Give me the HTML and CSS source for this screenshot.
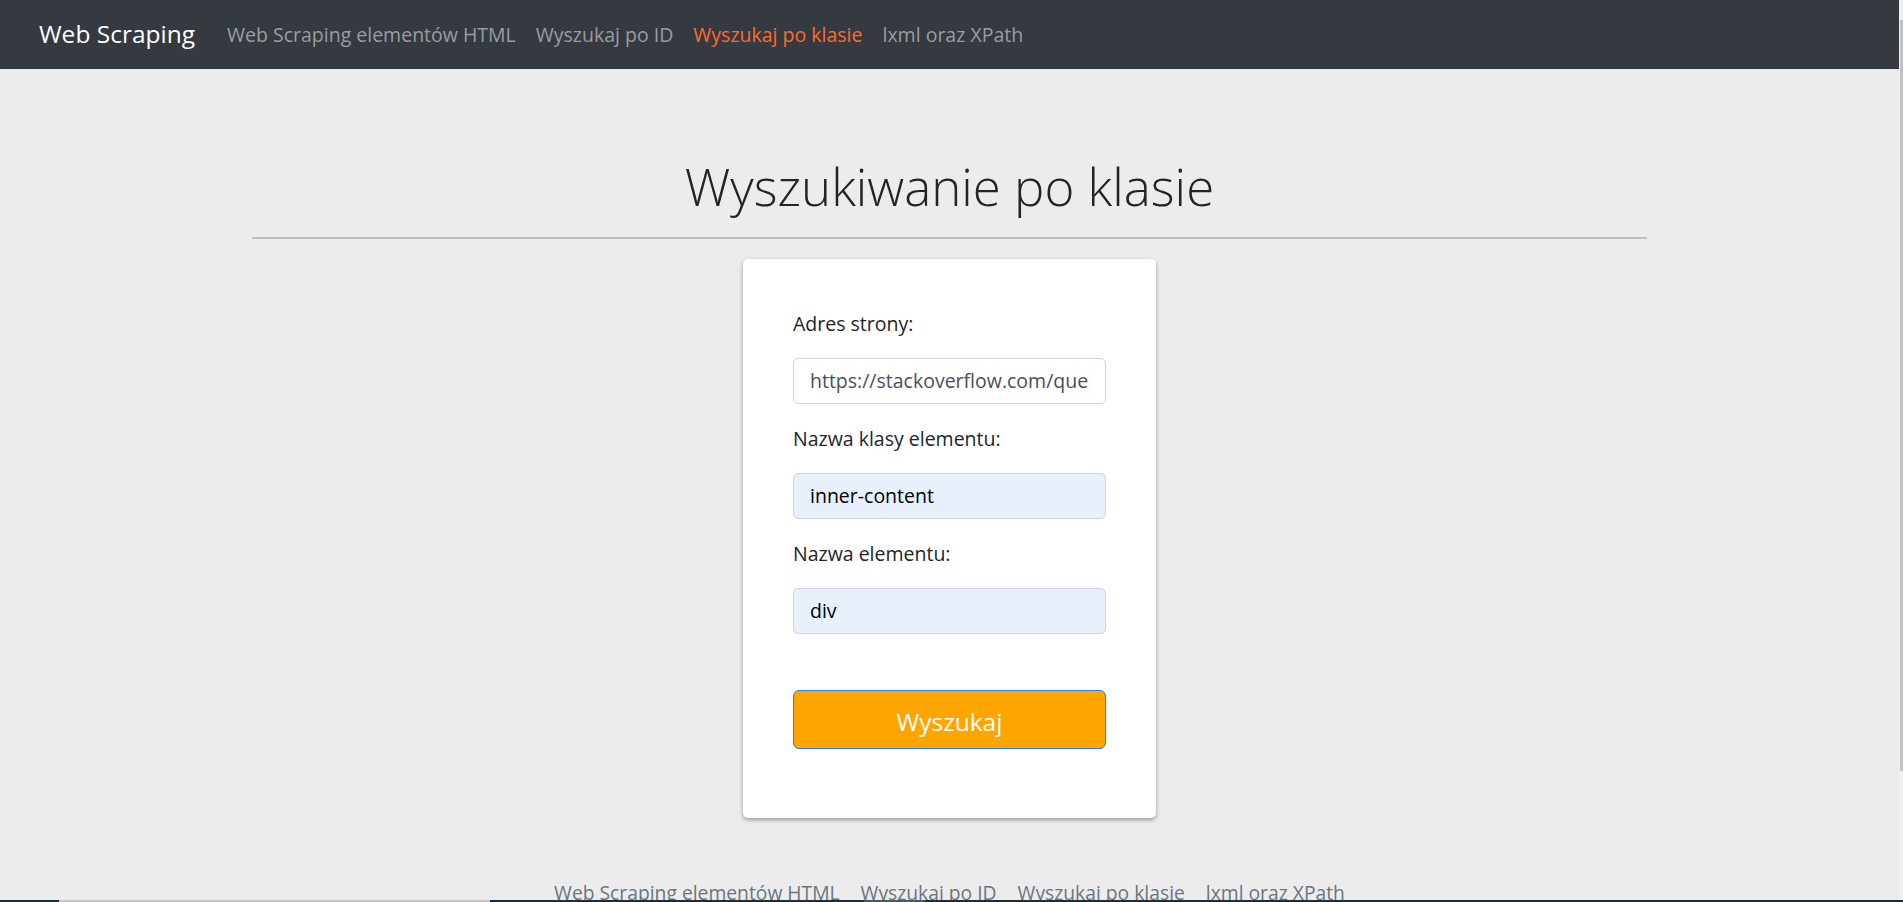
FILE: index.html
```html
<!DOCTYPE html>
<html lang="pl">
<head>
<meta charset="utf-8">
<title>Wyszukiwanie po klasie</title>
<link rel="stylesheet" href="styles.css">
</head>
<body>
<div class="page">
  <div class="viewport">
    <div class="main">
      <nav class="navbar">
        <a class="brand" href="#">Web Scraping</a>
        <ul class="nav">
          <li><a class="nav-link" href="#">Web Scraping elementów HTML</a></li>
          <li><a class="nav-link" href="#">Wyszukaj po ID</a></li>
          <li><a class="nav-link active" href="#">Wyszukaj po klasie</a></li>
          <li><a class="nav-link" href="#">lxml oraz XPath</a></li>
        </ul>
      </nav>
      <section class="content">
        <h1 class="title">Wyszukiwanie po klasie</h1>
        <hr class="divider">
        <form class="card">
          <div class="form-group">
            <label class="label">Adres strony:</label>
            <input class="input" type="text" value="https://stackoverflow.com/questions">
          </div>
          <div class="form-group">
            <label class="label">Nazwa klasy elementu:</label>
            <input class="input autofill" type="text" value="inner-content">
          </div>
          <div class="form-group">
            <label class="label">Nazwa elementu:</label>
            <input class="input autofill" type="text" value="div">
          </div>
          <button class="btn" type="button">Wyszukaj</button>
        </form>
      </section>
      <footer class="footer">
        <a class="foot-link" href="#">Web Scraping elementów HTML</a>
        <a class="foot-link" href="#">Wyszukaj po ID</a>
        <a class="foot-link" href="#">Wyszukaj po klasie</a>
        <a class="foot-link" href="#">lxml oraz XPath</a>
      </footer>
    </div>
    <div class="scrollbar"><div class="thumb"></div></div>
  </div>
  <div class="strip">
    <span class="seg seg-a"></span>
    <span class="seg seg-b"></span>
    <span class="seg seg-c"></span>
    <span class="seg seg-d"></span>
    <span class="seg seg-e"></span>
  </div>
</div>
</body>
</html>
```
FILE: styles.css
```css
html, body {
  margin: 0;
  padding: 0;
  overflow: hidden;
}
body {
  font-family: "Open Sans", "Noto Sans", sans-serif;
  color: #212529;
  background: #ececec;
}
.page {
  display: flex;
  flex-direction: column;
  height: 902px;
  overflow: hidden;
}
.viewport {
  display: grid;
  grid-template-columns: 1fr 4px;
  height: 900px;
  overflow: hidden;
}
.main {
  display: flex;
  flex-direction: column;
  min-width: 0;
  overflow: hidden;
}
.navbar {
  display: flex;
  align-items: center;
  height: 69px;
  flex: none;
  background: #343a40;
  padding-left: 39px;
  box-sizing: border-box;
}
.brand {
  font-size: 24.5px;
  line-height: 36px;
  padding-bottom: 2px;
  color: #ffffff;
  text-decoration: none;
  margin-right: 22px;
}
.nav {
  display: flex;
  list-style: none;
  margin: 0;
  padding: 0;
}
.nav-link {
  display: block;
  font-size: 19.5px;
  line-height: 30px;
  padding: 0 10px;
  color: #999da1;
  text-decoration: none;
}
.nav-link.active {
  color: #ff6a2d;
}
.content {
  display: flex;
  flex-direction: column;
  align-items: center;
}
.title {
  font-size: 51px;
  font-weight: 300;
  line-height: 61.2px;
  margin: 86.6px 0 0;
  color: #212529;
}
.divider {
  width: 1395px;
  border: 0;
  border-top: 2px solid #c0c0c0;
  margin: 20.2px 0 20px;
}
.card {
  width: 413px;
  box-sizing: border-box;
  padding: 50px;
  background: #ffffff;
  border-radius: 5px;
  box-shadow: 0 2px 4px rgba(0, 0, 0, 0.35);
  display: flex;
  flex-direction: column;
}
.form-group {
  display: flex;
  flex-direction: column;
  margin-bottom: 20px;
}
.label {
  font-size: 19.5px;
  line-height: 30px;
  margin-bottom: 19px;
  color: #212529;
}
.input {
  height: 46px;
  box-sizing: border-box;
  width: 100%;
  padding: 0 16px;
  font-family: inherit;
  font-size: 19.5px;
  color: #495057;
  background: #ffffff;
  border: 1px solid #ced4da;
  border-radius: 5px;
  outline: none;
}
.input.autofill {
  background: #e8f0fe;
  color: #000000;
}
.btn {
  margin-top: 36px;
  margin-bottom: 19px;
  height: 59px;
  box-sizing: border-box;
  padding: 12px 20px 8px;
  font-family: inherit;
  font-size: 24.5px;
  line-height: 37px;
  color: #ffffff;
  background: #ffa500;
  border: 1px solid #2a7fe6;
  border-radius: 6px;
}
.footer {
  display: flex;
  justify-content: center;
  margin-top: 60px;
  flex: none;
}
.foot-link {
  font-size: 19.3px;
  line-height: 30px;
  padding: 0 10.5px;
  color: #6c757d;
  text-decoration: none;
}
.scrollbar {
  background: #f1f1f1;
  display: flex;
  flex-direction: column;
  align-items: flex-end;
}
.thumb {
  margin-top: 20px;
  height: 751px;
  width: 3px;
  background: #c1c1c1;
}
.strip {
  display: flex;
  height: 2px;
  flex: none;
}
.seg { display: block; height: 2px; }
.seg-a { width: 59px; background: #1e2c36; }
.seg-b { width: 431px; background: #c6c6c6; }
.seg-c { width: 374px; background: #1e2c36; }
.seg-d { width: 61px; background: #4c5862; }
.seg-e { flex: 1; background: #1e2c36; }
```
